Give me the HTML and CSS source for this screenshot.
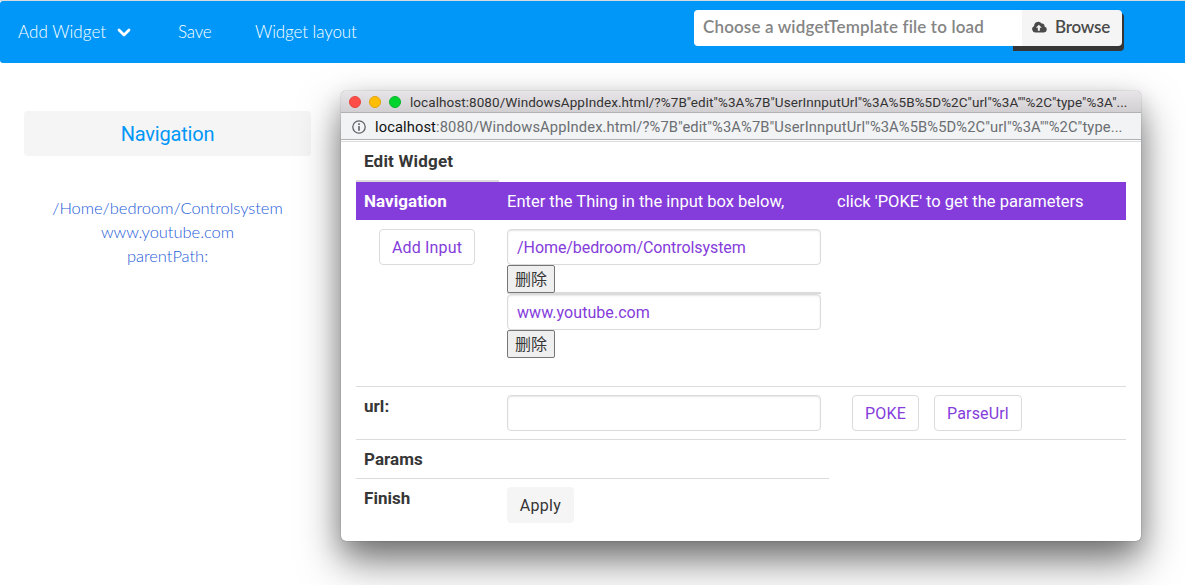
FILE: index.html
```html
<!DOCTYPE html>
<html lang="en">
<head>
<meta charset="utf-8">
<title>Edit Widget</title>
<link rel="stylesheet" href="styles.css">
</head>
<body>
<header class="navbar">
  <nav class="menu">
    <a class="menu-item menu-add"><span class="t-add">Add Widget</span>
      <svg class="chevron" viewBox="0 0 14 9"><path d="M2 2l5 5 5-5" fill="none" stroke="currentColor" stroke-width="2.8" stroke-linecap="round" stroke-linejoin="round"/></svg></a>
    <a class="menu-item menu-save">Save</a>
    <a class="menu-item menu-layout">Widget layout</a>
  </nav>
  <label class="file">
    <span class="file-name"><span class="t-choose">Choose a widgetTemplate file to load</span></span>
    <span class="file-cta">
      <svg class="cloud" viewBox="0 0 16 12"><path fill="currentColor" fill-rule="evenodd" d="M3.6 11.8A3.6 3.6 0 0 1 2.3 4.9 4.4 4.4 0 0 1 10.3 2.3a2.6 2.6 0 0 1 3 3.1A3.25 3.25 0 0 1 12.7 11.8ZM7.3 3.6 4.2 6.7h2v3.2h2.2V6.700h2Z"/></svg>
      <span class="t-browse">Browse</span>
    </span>
  </label>
</header>
<aside class="sidebar">
  <div class="side-title"><span class="t-side">Navigation</span></div>
  <div class="links"><a class="t-l1">/Home/bedroom/Controlsystem</a><a class="t-l2">www.youtube.com</a><a class="t-l3">parentPath:</a></div>
</aside>
<section class="window">
  <div class="titlebar"><i class="dot red"></i><i class="dot yellow"></i><i class="dot green"></i><span class="title">localhost:8080/WindowsAppIndex.html/?%7B"edit"%3A%7B"UserInnputUrl"%3A%5B%5D%2C"url"%3A""%2C"type"%3A"...</span></div>
  <div class="address">
    <svg class="info" viewBox="0 0 14 14"><circle cx="7" cy="7" r="6.2" fill="none" stroke="currentColor" stroke-width="1.3"/><path d="M6.2 3.3h1.6v1.6H6.2zM6.2 6.1h1.6v4.6H6.2z" fill="currentColor"/></svg>
    <span class="url"><b class="host">localhost</b>:8080/WindowsAppIndex.html/?%7B"edit"%3A%7B"UserInnputUrl"%3A%5B%5D%2C"url"%3A""%2C"type...</span></div>
  <div class="page">
    <div class="row"><div class="cell c1 head"><span class="t-edit">Edit Widget</span></div></div>
    <div class="row selected"><div class="cell c1 strong"><span class="t-nav">Navigation</span></div><div class="cell c2"><span class="t-enter">Enter the Thing in the input box below,</span></div><div class="cell c3"><span class="t-click">click 'POKE' to get the parameters</span></div></div>
    <div class="row inputs">
      <div class="cell c1"><button class="button add"><span class="t-input">Add Input</span></button></div>
      <div class="cell c2 stack">
        <div class="input"><span class="t-i1">/Home/bedroom/Controlsystem</span></div>
        <button class="remove">删除</button>
        <div class="group"><div class="input"><span class="t-i2">www.youtube.com</span></div></div>
        <button class="remove">删除</button>
      </div>
    </div>
    <div class="row line url-row"><div class="cell c1 strong"><span class="t-url">url:</span></div><div class="cell c2"><div class="input"></div></div><div class="cell c3 actions"><button class="button poke"><span class="t-poke">POKE</span></button><button class="button parse"><span class="t-parse">ParseUrl</span></button></div></div>
    <div class="row line params"><div class="cell c1 strong"><span class="t-params">Params</span></div></div>
    <div class="row line finish"><div class="cell c1 strong"><span class="t-finish">Finish</span></div><div class="cell c2"><button class="button apply"><span class="t-apply">Apply</span></button></div></div>
  </div>
</section>
</body>
</html>
```
FILE: styles.css
```css
* { box-sizing: border-box; }
body { margin: 0; height: 585px; overflow: hidden; background: #fff; color: #363636; font: 16px/24px Roboto, "Liberation Sans", sans-serif; position: relative; border-top: 1px solid #d8dbdd; }
span, a { white-space: nowrap; }
.navbar { height: 62px; background: #0097f8; border-radius: 3px 0 0 3px; display: flex; justify-content: space-between; padding: 9px 63px 0 18px; font-family: Lato, sans-serif; color: #fff; }
.menu { display: flex; padding-top: 9px; font-size: 17px; font-weight: 300; }
.menu-item { display: flex; align-items: center; height: 26px; }
.menu-add { width: 160px; }
.t-add { width: 99px; letter-spacing: .06px; }
.menu-save { width: 77px; letter-spacing: -.2px; }
.menu-layout { letter-spacing: -.1px; }
.chevron { width: 14px; height: 9px; }
.file { display: flex; width: 428px; height: 36px; color: #858585; font-weight: 600; font-size: 17px; }
.file-name { flex: 1; background: #fff; border-radius: 4px 0 0 4px; padding: 5px 9px; position: relative; z-index: 1; }
.t-choose { letter-spacing: .15px; }
.file-cta { width: 100px; background: #f5f5f5; border-radius: 0 4px 4px 0; padding: 5px 10px 7px; display: flex; align-items: center; gap: 8px; color: #4a4a4a; box-shadow: -9px 5px 0 #363636, 2px 5px 0 #363636, 2px 3px 0 #363636; }
.t-browse { letter-spacing: -.2px; }
.cloud { width: 15px; height: 12px; }
.sidebar { width: 287px; margin: 48px 0 0 24px; text-align: center; }
.side-title { height: 45px; background: #f5f5f5; border-radius: 4px; color: #0097f8; font-size: 20px; line-height: 46px; letter-spacing: -.2px; }
.links { margin-top: 40px; display: grid; color: #1d5cd8; font: 300 16.5px/24px Lato, sans-serif; letter-spacing: -.03px; }
.window { position: absolute; left: 341px; top: 90px; width: 800px; height: 450px; border-radius: 5px; background: #fff; box-shadow: 0 0 1px rgba(0,0,0,.65), 0 20px 40px rgba(0,0,0,.52), 0 8px 22px rgba(0,0,0,.14); overflow: hidden; }
.titlebar { height: 22px; display: flex; align-items: center; padding-left: 8px; background: linear-gradient(#e8e5e8, #d2cfd2); border-bottom: 1px solid #b3b0b3; color: #333; font-size: 13.5px; }
.title { letter-spacing: .06px; padding: 1px 0 0 1px; }
.url { letter-spacing: .11px; }
.dot { width: 12px; height: 12px; border-radius: 50%; margin-right: 8px; border: 1px solid #e8443e; background: #ff4d47; }
.yellow { background: #ffbe05; border-color: #e0a30b; }
.green { background: #00d42d; border-color: #0bb52d; }
.address { height: 27px; display: flex; align-items: center; gap: 9px; padding-left: 11px; background: #f1f3f4; border-bottom: 1px solid #aeb0b2; color: #6b6e72; font-size: 14.7px; padding-top: 1px; }
.info { width: 14px; height: 14px; color: #5f6368; }
.host { color: #111; font-weight: 400; }
.page { border-top: 1px solid #dcdcdc; margin-top: 1px; padding: 0 15px; }
.row { display: flex; }
.cell { padding: 8px; }
.c1 { width: 143px; } .c2 { width: 330px; } .c3 { width: 297px; }
.head { border-bottom: 2px solid #dbdbdb; height: 40px; font-size: 17px; font-weight: 700; letter-spacing: .2px; padding-top: 7px; }
.strong { font-size: 17px; font-weight: 700; letter-spacing: .05px; padding-top: 7px; }
.selected { height: 38px; background: #843cdb; color: #fff; }
.t-enter, .t-click { font-size: 16.5px; }
.inputs { height: 166px; }
.input { width: 314px; height: 36px; border: 1px solid #dbdbdb; border-radius: 4px; padding: 6px 9px; color: #843cdb; box-shadow: inset 0 1px 2px rgba(10,10,10,.1); background: #fff; }
.t-i1 { letter-spacing: -.07px; }
.t-i2 { letter-spacing: .06px; }
.button { height: 36px; border: 1px solid #dbdbdb; border-radius: 4px; background: #fff; color: #843cdb; font: inherit; padding: 2px 0 0; letter-spacing: .15px; }
.add { width: 96px; margin-left: 15px; }
.inputs .cell { padding-top: 9px; }
.group { border-top: 2px solid #dbdbdb; width: 314px; }
.remove { display: block; width: 48px; height: 28px; background: #efefef; border: 1px solid #767676; border-radius: 2px; padding: 0 0 2px; color: #363636; font: 16px/24px "Noto Sans CJK SC", sans-serif; position: relative; z-index: 1; }
.stack .group { margin-top: -1px; }
.line { border-top: 1px solid #dbdbdb; }
.url-row { height: 53px; }
.actions { display: flex; gap: 15px; padding-left: 23px; }
.poke { width: 67px; } .parse { width: 88px; }
.params { height: 39px; }
.finish { width: 473px; }
.apply { width: 67px; background: #f5f5f5; border-color: #f5f5f5; color: #363636; letter-spacing: .3px; }
```
